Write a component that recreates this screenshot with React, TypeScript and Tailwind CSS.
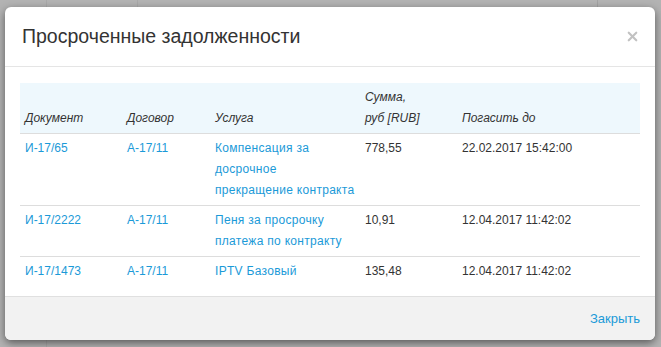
import { X } from 'lucide-react';

const rows = [
  { doc: 'И-17/65', contract: 'А-17/11', service: ['Компенсация за', 'досрочное', 'прекращение контракта'], sum: '778,55', due: '22.02.2017 15:42:00' },
  { doc: 'И-17/2222', contract: 'А-17/11', service: ['Пеня за просрочку', 'платежа по контракту'], sum: '10,91', due: '12.04.2017 11:42:02' },
  { doc: 'И-17/1473', contract: 'А-17/11', service: ['IPTV Базовый'], sum: '135,48', due: '12.04.2017 11:42:02' },
];

export default function App() {
  return (
    <div className="relative flex h-[347px] w-[661px] items-start overflow-hidden bg-[#b3b3b3] pl-[5px] pt-[7px] font-['Liberation_Sans',Arial,sans-serif]">
      {/* faint page lines behind the overlay */}
      <div className="absolute left-[46px] top-0 h-full w-px bg-[#a9a9a9]" />
      <div className="absolute left-[137px] top-0 h-[8px] w-px bg-[#a9a9a9]" />
      <div className="absolute left-[597px] top-0 h-[8px] w-px bg-[#a3a3a3]" />

      {/* modal */}
      <div className="relative flex h-[333px] w-[650px] flex-col overflow-hidden rounded-[6px] bg-white shadow-[0_3px_9px_rgba(0,0,0,0.5)]">
        <div className="flex h-[60px] shrink-0 items-center justify-between border-b border-[#e5e5e5] pl-[17px] pr-[15px]">
          <h4 className="text-[19.5px] text-[#333]">Просроченные задолженности</h4>
          <X className="h-[15px] w-[15px] text-[#c2c2c2]" strokeWidth={3.5} />
        </div>

        <div className="flex-1 px-[15px] pt-[16px]">
          <table className="w-[620px] table-fixed border-collapse text-[12px] leading-[21px] text-[#333]">
            <thead>
              <tr className="border-b border-[#ddd] bg-[#eef8fd] text-left align-bottom italic">
                <th className="w-[102px] px-[5px] py-[4px] font-normal">Документ</th>
                <th className="w-[88px] px-[5px] py-[4px] font-normal">Договор</th>
                <th className="w-[150px] px-[5px] py-[4px] font-normal">Услуга</th>
                <th className="w-[97px] px-[5px] py-[4px] font-normal">Сумма,<br />руб [RUB]</th>
                <th className="px-[5px] py-[4px] font-normal">Погасить до</th>
              </tr>
            </thead>
            <tbody>
              {rows.map((r, i) => (
                <tr key={r.doc} className={i < rows.length - 1 ? 'border-b border-[#ddd] align-top' : 'align-top'}>
                  <td className="px-[5px] py-[4px] text-[#1b9ad8]">{r.doc}</td>
                  <td className="px-[5px] py-[4px] text-[#1b9ad8]">{r.contract}</td>
                  <td className="px-[5px] py-[4px] tracking-[0.3px] text-[#1b9ad8]">
                    {r.service.map((line) => (
                      <div key={line} className="whitespace-nowrap">{line}</div>
                    ))}
                  </td>
                  <td className="px-[5px] py-[4px]">{r.sum}</td>
                  <td className="px-[5px] py-[4px]">{r.due}</td>
                </tr>
              ))}
            </tbody>
          </table>
        </div>

        <div className="flex h-[44px] shrink-0 items-center justify-end border-t border-[#e0e0e0] bg-[#f2f2f2] pr-[15px]">
          <span className="text-[13px] text-[#1b9ad8]">Закрыть</span>
        </div>
      </div>
    </div>
  );
}
